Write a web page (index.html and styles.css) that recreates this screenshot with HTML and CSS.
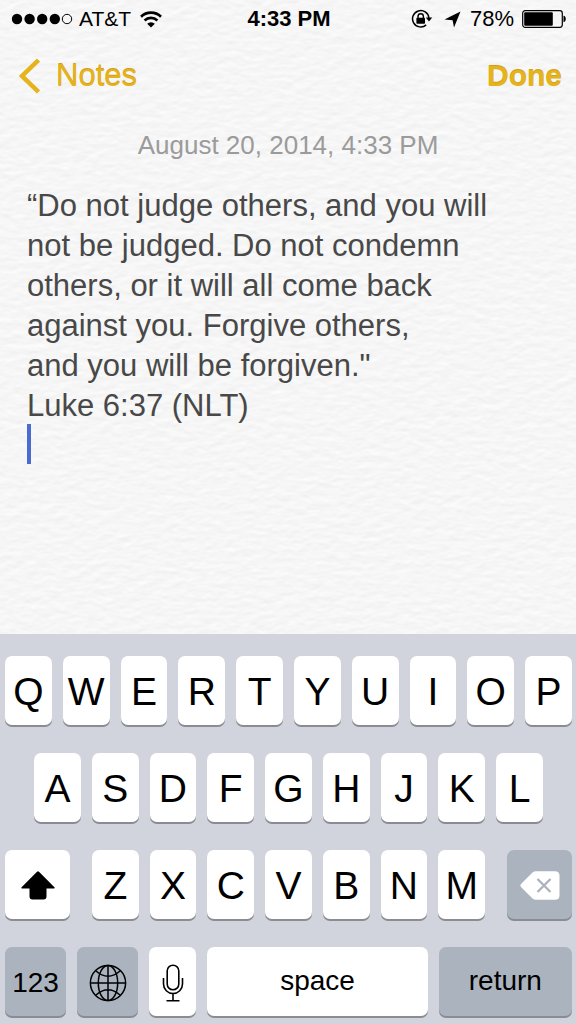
FILE: index.html
```html
<!DOCTYPE html>
<html lang="en">
<head>
<meta charset="utf-8">
<meta name="viewport" content="width=device-width, initial-scale=1">
<title>Notes</title>
<link rel="stylesheet" href="styles.css">
</head>
<body>
<div class="app">
  <main class="paper">
    <svg class="grain" aria-hidden="true" width="100%" height="100%">
      <filter id="grain" x="0" y="0" width="100%" height="100%" color-interpolation-filters="sRGB">
        <feTurbulence type="fractalNoise" baseFrequency="0.08 0.15" numOctaves="2" seed="4"/>
        <feDiffuseLighting surfaceScale="0.14" diffuseConstant="1.15" lighting-color="#f7f7f7">
          <feDistantLight azimuth="260" elevation="60"/>
        </feDiffuseLighting>
      </filter>
      <rect width="100%" height="100%" filter="url(#grain)"/>
    </svg>

    <div class="status">
      <div class="status-side">
        <svg width="62" height="12" viewBox="0 0 62 12" aria-hidden="true">
          <circle cx="6" cy="6" r="5.2"/><circle cx="18.600" cy="6" r="5.2"/><circle cx="31.200" cy="6" r="5.2"/><circle cx="43.800" cy="6" r="5.2"/>
          <circle cx="56" cy="6" r="4.700" fill="none" stroke="#000"/>
        </svg>
        <span class="carrier">AT&amp;T</span>
        <svg class="wifi" width="22" height="17" viewBox="0 0 22 17" aria-hidden="true">
          <g fill="none" stroke="#000" stroke-width="2.600">
            <path d="M1 5.700a14.300 14.300 0 0 1 20 0"/><path d="M4.600 9.500a9.200 9.200 0 0 1 12.800 0"/>
          </g>
          <path d="M11 16.500 7.200 12.700a5.500 5.500 0 0 1 7.600 0z"/>
        </svg>
      </div>
      <span class="clock">4:33 PM</span>
      <div class="status-side status-right">
        <svg width="22" height="20" viewBox="0 0 22 20" aria-hidden="true">
          <path d="M15.200 15.900A8.200 8.200 0 1 1 17.900 9" fill="none" stroke="#000" stroke-width="1.500"/>
          <path d="M14.800 8.600h6.400L18 12.600z"/>
          <rect x="5.400" y="8.800" width="8.600" height="6" rx=".8"/>
          <path d="M7 9V7.400a2.700 2.700 0 0 1 5.400 0V9" fill="none" stroke="#000" stroke-width="1.400"/>
        </svg>
        <svg class="locate" width="17" height="17" viewBox="0 0 17 17" aria-hidden="true"><path d="M16.500.5 10 16.500 8.600 9.200.5 8.600z"/></svg>
        <span class="percent">78%</span>
        <svg class="battery" width="45" height="18" viewBox="0 0 45 18" aria-hidden="true">
          <rect x=".7" y=".7" width="39.600" height="16.600" rx="2.500" fill="none" stroke="#000" stroke-width="1.200"/>
          <rect x="2.200" y="2.200" width="28.600" height="13.600" rx="1"/>
          <path d="M41.500 5.800c3 .4 3 6 0 6.400z"/>
        </svg>
      </div>
    </div>

    <header class="nav">
      <button class="nav-button" type="button">
        <svg width="22" height="36" viewBox="0 0 22 36" aria-hidden="true"><path d="M20.500 2 4 18 20.500 34" fill="none" stroke="currentColor" stroke-width="4.500"/></svg>
        Notes
      </button>
      <button class="nav-button done" type="button">Done</button>
    </header>

    <time class="date" datetime="2014-08-20T16:33">August 20, 2014, 4:33 PM</time>

    <div class="note">
      <textarea class="note-text" aria-label="Note" rows="7" spellcheck="false">“Do not judge others, and you will
not be judged. Do not condemn
others, or it will all come back
against you. Forgive others,
and you will be forgiven."
Luke 6:37 (NLT)
</textarea>
      <span class="caret"></span>
    </div>
  </main>

  <section class="keyboard" aria-label="Keyboard">
    <div class="row">
      <button class="key" type="button">Q</button><button class="key" type="button">W</button><button class="key" type="button">E</button><button class="key" type="button">R</button><button class="key" type="button">T</button><button class="key" type="button">Y</button><button class="key" type="button">U</button><button class="key" type="button">I</button><button class="key" type="button">O</button><button class="key" type="button">P</button>
    </div>
    <div class="row row-home">
      <button class="key" type="button">A</button><button class="key" type="button">S</button><button class="key" type="button">D</button><button class="key" type="button">F</button><button class="key" type="button">G</button><button class="key" type="button">H</button><button class="key" type="button">J</button><button class="key" type="button">K</button><button class="key" type="button">L</button>
    </div>
    <div class="row row-shift">
      <button class="key" type="button" aria-label="Shift">
        <svg width="34" height="29" viewBox="0 0 34 29" aria-hidden="true"><path d="M16 .8q1-.9 2 0L33.400 16.200q1 1.200-.5 1.200H25.500v8.100q0 3-3 3h-11q-3 0-3-3v-8.100H1.100q-1.500 0-.5-1.200z"/></svg>
      </button>
      <div class="letters">
        <button class="key" type="button">Z</button><button class="key" type="button">X</button><button class="key" type="button">C</button><button class="key" type="button">V</button><button class="key" type="button">B</button><button class="key" type="button">N</button><button class="key" type="button">M</button>
      </div>
      <button class="key key-dark" type="button" aria-label="Delete">
        <svg width="40" height="29" viewBox="0 0 40 29" aria-hidden="true"><path d="M12.500 1.500Q14 .3 16 .3h19q4.500 0 4.500 4.500v19.400q0 4.500-4.500 4.500H16q-2 0-3.500-1.200L1 16q-1.200-1.500 0-3z" fill="#fff"/><path d="M17.500 8 30.500 21M30.500 8 17.500 21" stroke="#abb3be" stroke-width="2.300"/></svg>
      </button>
    </div>
    <div class="row row-bottom">
      <button class="key key-dark key-word" type="button">123</button>
      <button class="key key-dark" type="button" aria-label="Next keyboard">
        <svg width="38" height="38" viewBox="0 0 38 38" fill="none" stroke="#000" stroke-width="1.500" aria-hidden="true"><circle cx="19" cy="19" r="17.600"/><ellipse cx="19" cy="19" rx="9.700" ry="17.600"/><path d="M19 1.400v35.200M1.400 19h35.200M6.700 6.700q12.300 11 24.600 0M6.700 31.300q12.300-11 24.600 0"/></svg>
      </button>
      <button class="key" type="button" aria-label="Dictation">
        <svg width="22" height="38" viewBox="0 0 22 38" fill="none" stroke="#000" stroke-width="1.600" aria-hidden="true"><rect x="5.200" y="1.200" width="11.600" height="24.600" rx="5.800"/><path d="M1.500 14v6a9.500 9.500 0 0 0 19 0v-6M11 29.500V36.500M4.500 36.700h13"/></svg>
      </button>
      <button class="key key-word key-raised" type="button">space</button>
      <button class="key key-dark key-word key-raised" type="button">return</button>
    </div>
  </section>
</div>
</body>
</html>
```
FILE: styles.css
```css
* { box-sizing: border-box; }

body {
  margin: 0;
  font-family: "Liberation Sans", Arial, sans-serif;
  color: #000;
}

button {
  border: 0;
  padding: 0;
  font: inherit;
  color: inherit;
  background: none;
}

svg { flex: none; }

.app {
  min-height: 100vh;
  display: flex;
  flex-direction: column;
}

.paper {
  flex: 1;
  position: relative;
  isolation: isolate;
  display: flex;
  flex-direction: column;
  background: #f6f6f6;
}

/* Paper texture behind the whole note */
.grain {
  position: absolute;
  inset: 0;
  z-index: -1;
}

.status {
  display: grid;
  grid-template-columns: 1fr auto 1fr;
  align-items: center;
  height: 38px;
  padding: 0 9px 0 11px;
  font-size: 21px;
}

.status-side {
  display: flex;
  align-items: center;
}

.status-right { justify-content: flex-end; }
.carrier { margin-left: 6px; }
.wifi { margin-left: 9px; }
.clock { font-size: 22px; font-weight: bold; }
.locate { margin-left: 11px; }
.percent { margin-left: 9px; font-size: 22px; }
.battery { margin-left: 8px; }

.nav {
  display: flex;
  justify-content: space-between;
  align-items: center;
  height: 76px;
  padding: 0 14px 0 18px;
}

.nav-button {
  display: flex;
  align-items: center;
  gap: 16px;
  font-size: 31px;
  color: #e5b31c;
  text-shadow: 0 -1px 0 #d39e18;
}

.done { font-size: 30px; font-weight: bold; }

.date {
  margin-top: 16px;
  text-align: center;
  font-size: 26px;
  line-height: 30px;
  color: #9b9b9b;
}

.note {
  position: relative;
  margin: 26px 16px 0 27px;
}

.note-text {
  display: block;
  width: 100%;
  padding: 0;
  border: 0;
  outline: 0;
  resize: none;
  overflow: hidden;
  background: none;
  font: 31px/40px "Liberation Sans", Arial, sans-serif;
  color: #484848;
  caret-color: transparent;
}

.caret {
  position: absolute;
  left: 0;
  bottom: 2px;
  width: 4px;
  height: 40px;
  background: #4a6cd0;
}

.keyboard {
  display: flex;
  flex-direction: column;
  gap: 28px;
  padding: 22px 4px 8px 5px;
  background: #d1d4dc;
}

.row {
  display: flex;
  gap: 11px;
}

.row-home { padding: 0 29px; }

.row-shift {
  display: grid;
  grid-template-columns: 65fr 393fr 65fr;
  gap: 22px;
}

.letters {
  display: flex;
  gap: 11px;
}

.row-bottom {
  display: grid;
  grid-template-columns: 61fr 61fr 47fr 220fr 133fr;
}

.key {
  flex: 1 1 0;
  min-width: 0;
  height: 69px;
  padding-top: 2px;
  display: flex;
  align-items: center;
  justify-content: center;
  border-radius: 7px;
  background: #fff;
  box-shadow: 0 2px 0 #898c92;
  font-size: 39px;
}

.key-dark { background: #abb3be; }
.key-word { font-size: 28px; }
.key-raised { padding: 0 0 2px; }
```
